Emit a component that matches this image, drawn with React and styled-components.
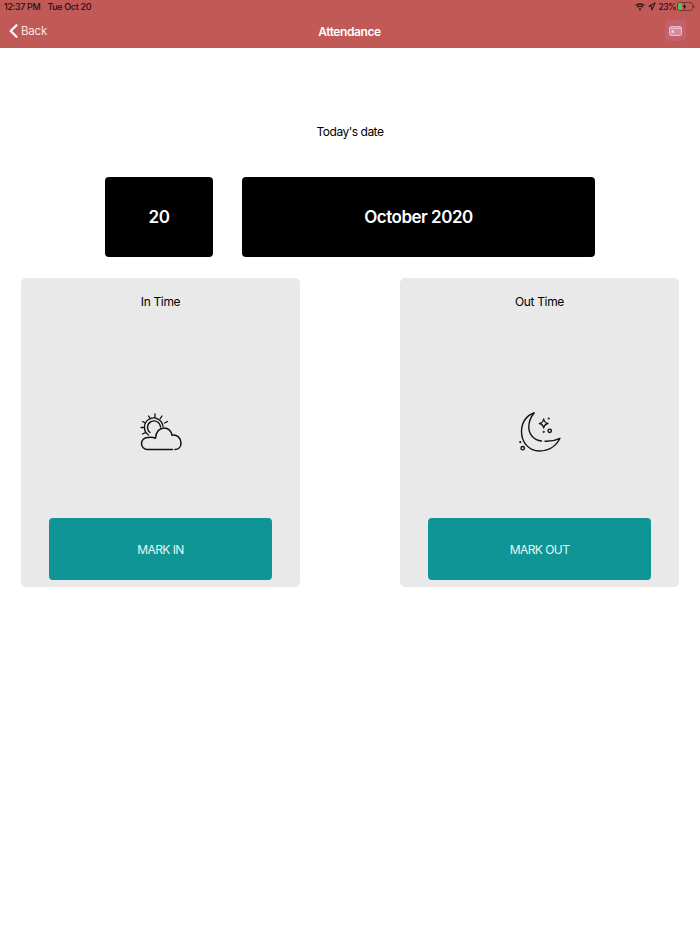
import React from "react";
import styled, { createGlobalStyle } from "styled-components";

const Global = createGlobalStyle`
  html, body { margin: 0; padding: 0; background: #fff; }
  body { font-family: Inter, "Liberation Sans", sans-serif; color: #000; }
`;

const Page = styled.div`
  width: 700px;
  height: 934px;
  overflow: hidden;
  display: flex;
  flex-direction: column;
`;

const Header = styled.header`
  height: 48px;
  background: #c15957;
  display: flex;
  flex-direction: column;
  flex: none;
`;

const StatusBar = styled.div`
  height: 14px;
  padding: 0 5px 0 4px;
  display: flex;
  align-items: center;
  justify-content: space-between;
  font-size: 9px;
  letter-spacing: -0.35px;
  font-weight: 500;
  color: #2a0f0f;
`;

const StatusGroup = styled.div`
  display: flex;
  align-items: center;
  gap: ${(p) => p.$gap}px;
`;

const BatteryLevel = styled.span`
  font-size: 8.6px;
  letter-spacing: -0.6px;
  margin-right: -2px;
`;

const NavBar = styled.div`
  height: 34px;
  display: grid;
  grid-template-columns: 1fr auto 1fr;
  align-items: center;
  padding: 1px 14px 0 9px;
`;

const BackLink = styled.div`
  display: flex;
  align-items: center;
  gap: 3px;
  color: #f7e4e3;
  font-size: 11.500px;
  letter-spacing: -0.2px;
`;

const NavTitle = styled.div`
  color: #fff;
  font-size: 12px;
  letter-spacing: -0.4px;
  font-weight: 600;
  transform: translateX(2px);
`;

const NavAction = styled.div`
  justify-self: end;
  width: 21px;
  height: 21px;
  margin-top: -1px;
  border-radius: 4px;
  background: #c4616f;
  display: flex;
  align-items: center;
  justify-content: center;
`;

const Main = styled.main`
  flex: 1;
  display: flex;
  flex-direction: column;
`;

const DateLabel = styled.div`
  margin-top: 76px;
  height: 16px;
  line-height: 16px;
  text-align: center;
  font-size: 12px;
  letter-spacing: -0.5px;
`;

const DateRow = styled.div`
  margin-top: 37px;
  padding-left: 105px;
  display: flex;
  gap: 29px;
`;

const DateBox = styled.div`
  width: ${(p) => p.$width}px;
  height: 80px;
  background: #000;
  color: #fff;
  border-radius: 4px;
  display: flex;
  align-items: center;
  justify-content: center;
  font-size: 17px;
  letter-spacing: -0.5px;
  font-weight: 600;
`;

const Cards = styled.div`
  margin-top: 21px;
  padding: 0 21px;
  display: flex;
  justify-content: space-between;
`;

const Card = styled.section`
  width: 279px;
  height: 309px;
  box-sizing: border-box;
  background: #e9e9e9;
  border-radius: 5px;
  padding: 16px 28px 7px;
  display: flex;
  flex-direction: column;
  align-items: center;
`;

const CardTitle = styled.div`
  height: 15px;
  line-height: 15px;
  font-size: 12px;
  letter-spacing: -0.35px;
`;

const IconSlot = styled.div`
  flex: 1;
  display: flex;
  align-items: center;
  justify-content: center;
  padding: 38px 0 0 1px;
`;

const MarkButton = styled.button`
  width: 223px;
  height: 62px;
  flex: none;
  border: 0;
  border-radius: 4px;
  background: #0f9595;
  color: #e6f6f6;
  font-family: inherit;
  font-size: 12px;
  letter-spacing: -0.55px;
  padding: 0;
`;

const SunCloud = () => (
  <svg width="43" height="39" viewBox="14.500 13.500 43 39" fill="none" stroke="#111" strokeWidth="1.300" strokeLinecap="round" strokeLinejoin="round">
    <path d="M23 35.500A9.300 9.300 0 1 1 37.500 27" />
    <path d="M24.500 33A6.500 6.500 0 1 1 35 27.500" />
    <path d="M29.500 14.500v3.400M23 16.500l1.800 2.700M36.500 16.500l-1.800 2.700M42 22l-2.900 1.500M17 22l2.900 1.500M15.500 28h3.500M17 34.500l3-1.300" />
    <path d="M47 50H22A6 6 0 0 1 22 38C24.500 37.500 27.500 37.600 30 38.800C30.300 32.500 34 28.500 38.500 28.500C42.500 28.500 45.500 31 46.500 35.800C51.500 34.800 55.500 38.500 55.500 43.500C55.500 47.500 52.800 50 49.500 50" strokeWidth="1.500" />
  </svg>
);

const Moon = () => (
  <svg width="43" height="41" viewBox="13 12.500 43 41" fill="none" stroke="#111" strokeWidth="1.400" strokeLinecap="round" strokeLinejoin="round">
    <path d="M28 13.500C20 16 15.500 23.500 15.500 32C15.500 43 23 51.500 33.500 51.500C43 51.500 50 46.500 54 38.800C49.500 41 44.500 42 39 41.800" />
    <path d="M28 13.500C24.500 18 22.800 23 22.800 27.500C22.800 35 28 40.500 35.500 41.500" />
    <path d="M37.700 19.500C38.200 22.500 39 23.400 42 24C39 24.600 38.200 25.500 37.700 28.500C37.200 25.500 36.400 24.600 33.400 24C36.400 23.400 37.200 22.500 37.700 19.500Z" strokeWidth="1.300" />
    <circle cx="43.700" cy="31.300" r="1.700" />
    <circle cx="16.700" cy="48.700" r="1.700" />
    <circle cx="42.700" cy="19" r=".4" />
    <circle cx="37.700" cy="32.300" r=".4" />
    <circle cx="14.300" cy="42.700" r=".4" />
  </svg>
);

const Wifi = () => (
  <svg width="10" height="8" viewBox="0 0 11 9" fill="#2a0f0f">
    <path d="M5.500 8.500 3.900 6.600a2.400 2.400 0 0 1 3.200 0zM2.900 5.400 1.900 4.200a5.600 5.600 0 0 1 7.200 0l-1 1.200a4 4 0 0 0-5.200 0zM1.200 3.400.2 2.200a8.200 8.200 0 0 1 10.600 0l-1 1.200a6.700 6.700 0 0 0-8.600 0z" />
  </svg>
);

const Location = () => (
  <svg width="8" height="9" viewBox="0 0 8 9" fill="none" stroke="#2a0f0f" strokeWidth="1" strokeLinejoin="round">
    <path d="M7.200.8 .8 4.200h3v3.800z" />
  </svg>
);

const Battery = () => (
  <svg width="18" height="9" viewBox="0 0 18 9">
    <rect x=".5" y=".5" width="15" height="8" rx="2" fill="none" stroke="#5a2a2a" strokeWidth=".7" />
    <rect x="1.300" y="1.300" width="3.400" height="6.400" rx=".8" fill="#4ccf5a" />
    <path d="M16.300 3v3c.8-.2 1.200-.8 1.200-1.500S17.100 3.200 16.300 3z" fill="#5a2a2a" />
    <path d="M8 1 5.800 5h1.400L6.800 8l2.400-4H7.700z" fill="#1a0808" />
  </svg>
);

const CalendarGlyph = () => (
  <svg width="13" height="10" viewBox="0 0 13 10" fill="none">
    <rect x=".6" y=".6" width="11.800" height="8.800" rx="1" fill="#d38a96" stroke="#ecc4cc" strokeWidth="1" />
    <path d="M.6 2.400h11.800" stroke="#ecc4cc" strokeWidth="1" />
    <rect x="2.500" y="4.300" width="2.500" height="2.500" fill="#f3d6dc" />
  </svg>
);

const Chevron = () => (
  <svg width="9" height="14" viewBox="0 0 9 14" fill="none" stroke="#fff" strokeWidth="2.200" strokeLinecap="round" strokeLinejoin="round">
    <path d="M7.500 1.200 1.700 7l5.800 5.800" />
  </svg>
);

export default function App() {
  return (
    <Page>
      <Global />
      <Header>
        <StatusBar>
          <StatusGroup $gap={7}>
            <span>12:37 PM</span>
            <span>Tue Oct 20</span>
          </StatusGroup>
          <StatusGroup $gap={3}>
            <Wifi />
            <Location />
            <BatteryLevel>23%</BatteryLevel>
            <Battery />
          </StatusGroup>
        </StatusBar>
        <NavBar>
          <BackLink>
            <Chevron />
            Back
          </BackLink>
          <NavTitle>Attendance</NavTitle>
          <NavAction>
            <CalendarGlyph />
          </NavAction>
        </NavBar>
      </Header>
      <Main>
        <DateLabel>Today's date</DateLabel>
        <DateRow>
          <DateBox $width={108}>20</DateBox>
          <DateBox $width={353}>October 2020</DateBox>
        </DateRow>
        <Cards>
          <Card>
            <CardTitle>In Time</CardTitle>
            <IconSlot>
              <SunCloud />
            </IconSlot>
            <MarkButton>MARK IN</MarkButton>
          </Card>
          <Card>
            <CardTitle>Out Time</CardTitle>
            <IconSlot>
              <Moon />
            </IconSlot>
            <MarkButton>MARK OUT</MarkButton>
          </Card>
        </Cards>
      </Main>
    </Page>
  );
}
